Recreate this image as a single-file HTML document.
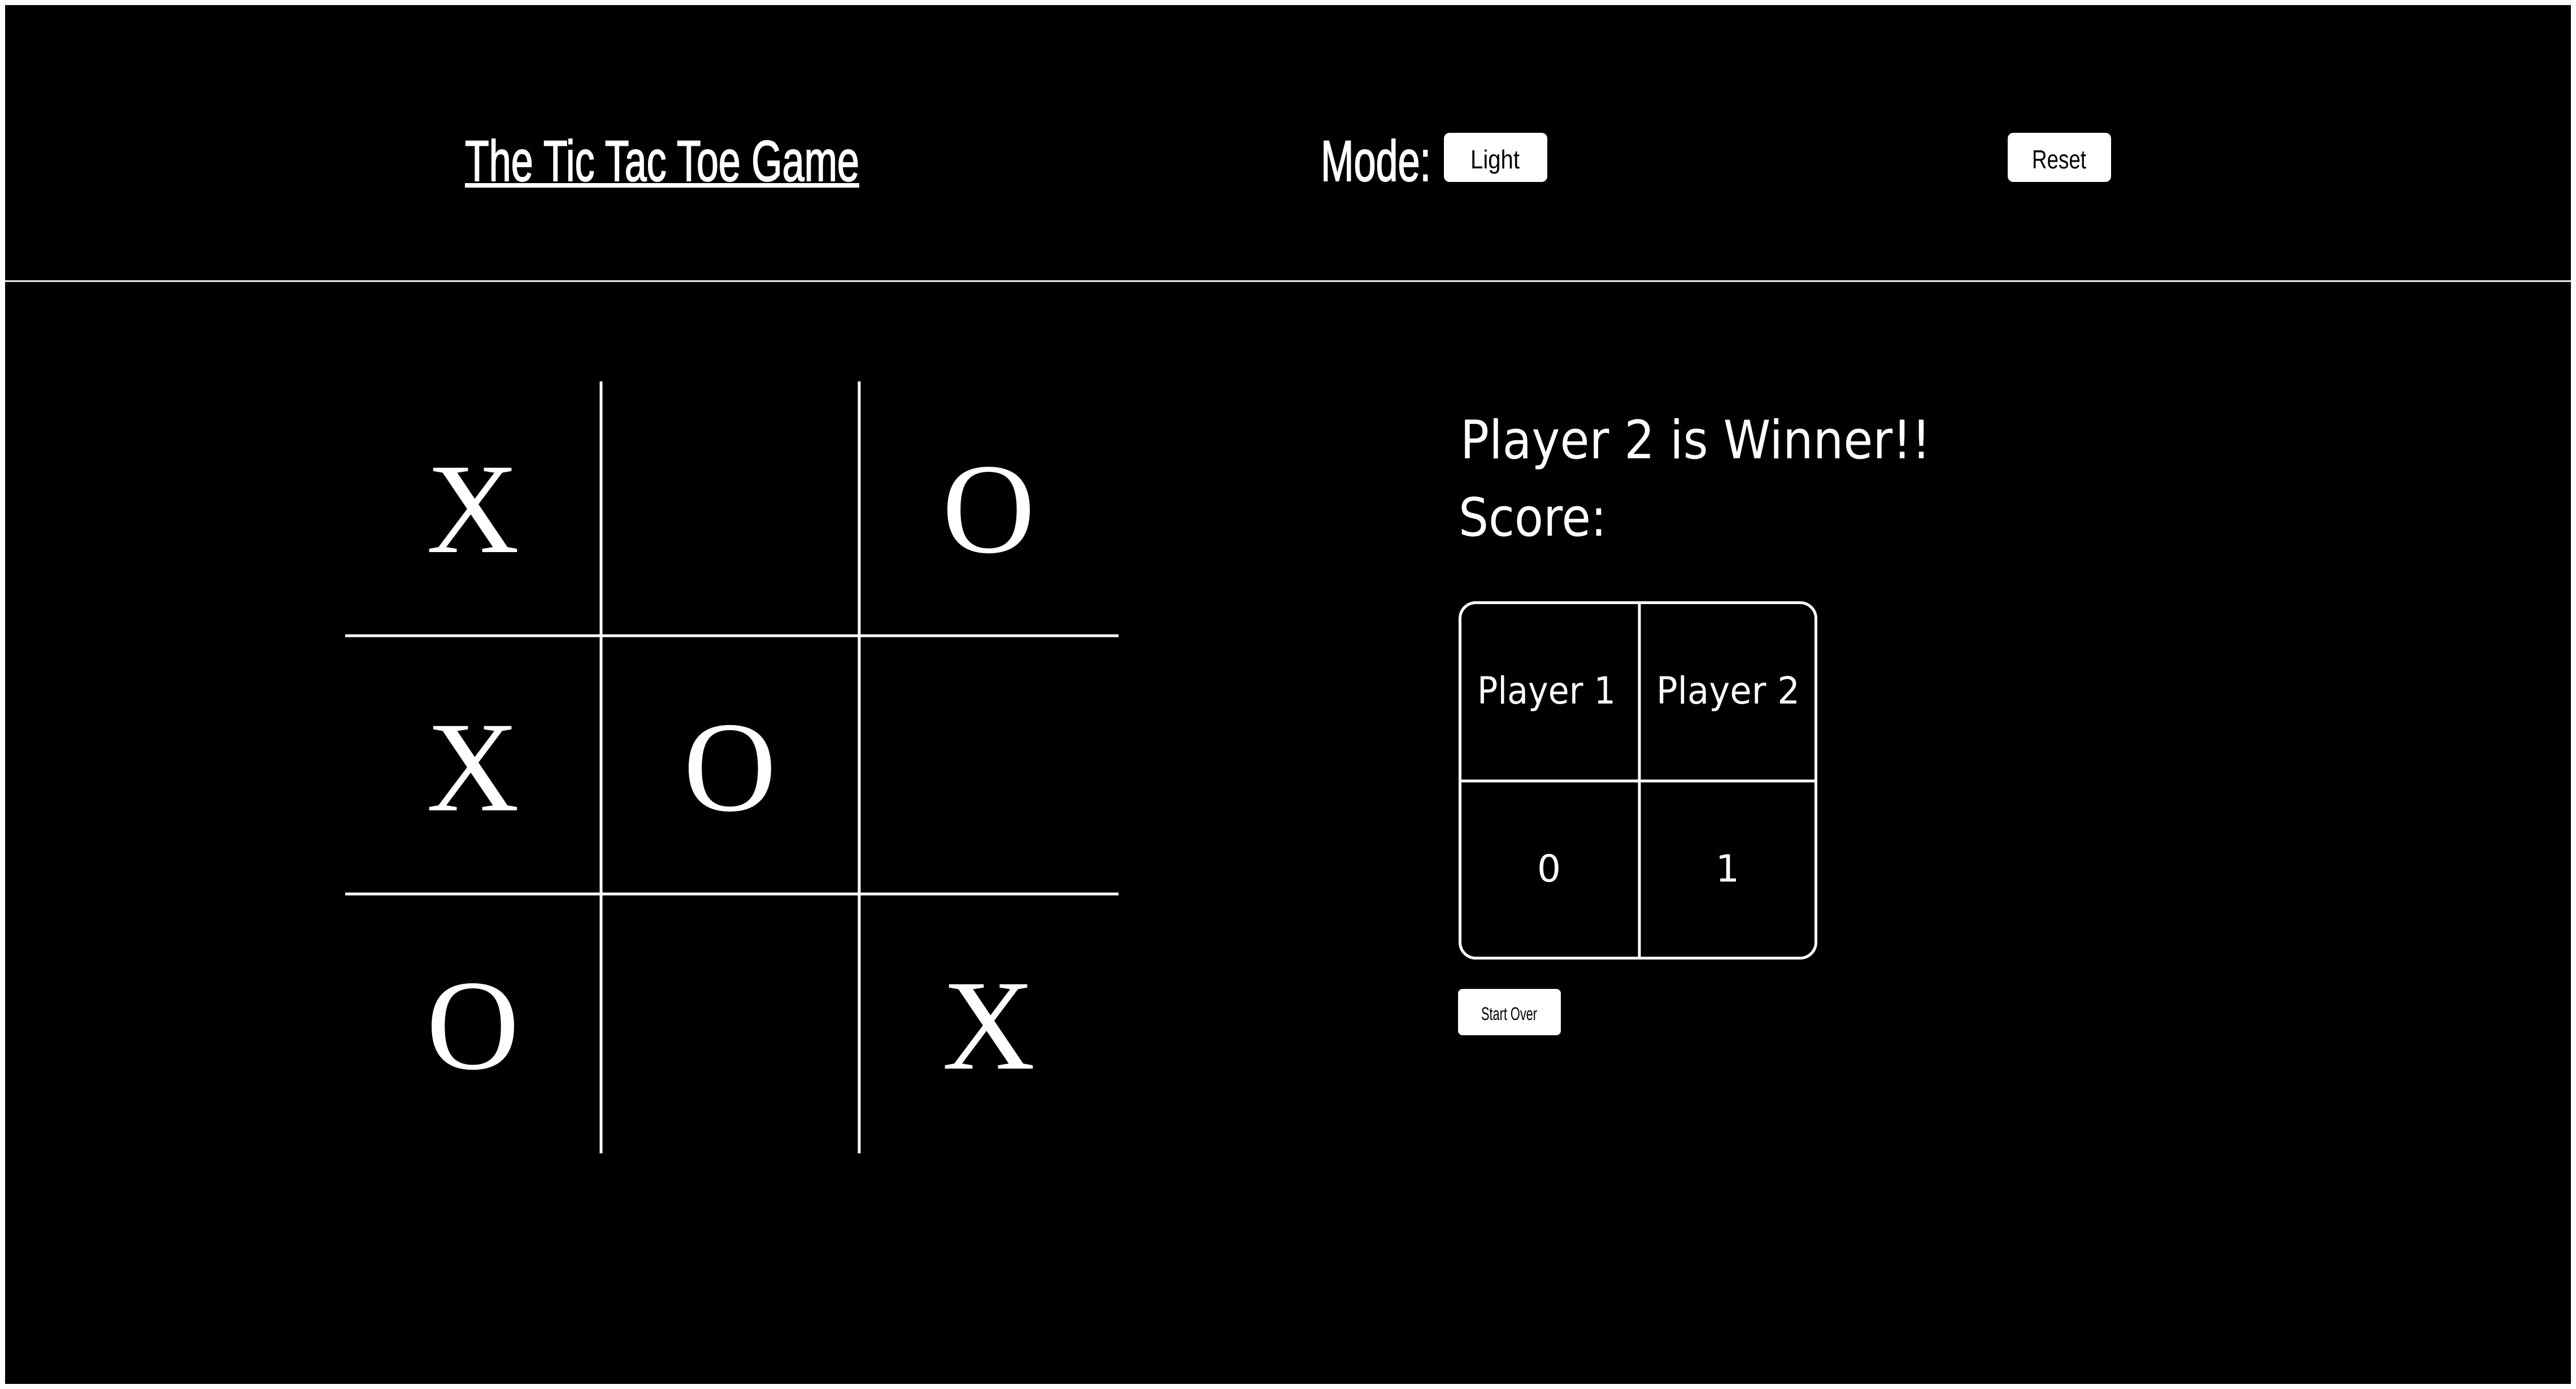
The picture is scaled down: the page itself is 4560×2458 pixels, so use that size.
<!DOCTYPE html>
<html><head><meta charset="utf-8"><style>
html,body{margin:0;padding:0;background:#fff;width:4560px;height:2458px;overflow:hidden}
svg{display:block}
</style></head><body>
<svg width="4560" height="2458" viewBox="0 0 4560 2458" xmlns="http://www.w3.org/2000/svg">
<rect x="9" y="9" width="4542" height="2440" fill="#000"/>
<rect x="9" y="496" width="4542" height="3" fill="#eee"/>
<g fill="#fff" font-family="Liberation Sans Narrow, Liberation Sans, sans-serif">
<text x="823" y="320" font-size="102" textLength="698" lengthAdjust="spacingAndGlyphs" stroke="#fff" stroke-width="2">The Tic Tac Toe Game</text>
<rect x="823" y="324" width="698" height="8"/>
<text x="2338" y="320" font-size="102" textLength="195" lengthAdjust="spacingAndGlyphs" stroke="#fff" stroke-width="2">Mode:</text>
<rect x="2556" y="235" width="183" height="87" rx="10"/>
<rect x="3554" y="235" width="183" height="87" rx="10"/>
<rect x="2581" y="1750" width="182" height="82" rx="8"/>
</g>
<g fill="#000" font-family="Liberation Sans Narrow, Liberation Sans, sans-serif">
<text x="2603" y="298" font-size="46" textLength="87" lengthAdjust="spacingAndGlyphs">Light</text>
<text x="3597" y="298" font-size="46" textLength="96" lengthAdjust="spacingAndGlyphs">Reset</text>
<text x="2622" y="1805" font-size="32" textLength="99" lengthAdjust="spacingAndGlyphs">Start Over</text>
</g>
<g stroke="#fff" stroke-width="5">
<line x1="1064" y1="675" x2="1064" y2="2041"/>
<line x1="1521" y1="675" x2="1521" y2="2041"/>
<line x1="611" y1="1125" x2="1980" y2="1125"/>
<line x1="611" y1="1582" x2="1980" y2="1582"/>
</g>
<g fill="#fff" font-family="Liberation Serif, serif" font-size="228" text-anchor="middle">
<text x="837" y="977">X</text>
<text x="1750" y="977">O</text>
<text x="837" y="1434">X</text>
<text x="1292" y="1434">O</text>
<text x="837" y="1891">O</text>
<text x="1750" y="1891">X</text>
</g>
<g fill="#fff" font-family="DejaVu Sans, sans-serif">
<text x="2585" y="811" font-size="94" textLength="833" lengthAdjust="spacingAndGlyphs">Player 2 is Winner!!</text>
<text x="2582" y="948" font-size="94" textLength="262" lengthAdjust="spacingAndGlyphs">Score:</text>
<text x="2615" y="1245" font-size="66" textLength="245" lengthAdjust="spacingAndGlyphs">Player 1</text>
<text x="2932" y="1245" font-size="66" textLength="254" lengthAdjust="spacingAndGlyphs">Player 2</text>
<text x="2742" y="1560" font-size="66" text-anchor="middle">0</text>
<text x="3058" y="1560" font-size="66" text-anchor="middle">1</text>
</g>
<rect x="2584.5" y="1066.5" width="630" height="629" rx="28" fill="none" stroke="#fff" stroke-width="5"/>
<line x1="2902" y1="1066" x2="2902" y2="1696" stroke="#fff" stroke-width="5"/>
<line x1="2584" y1="1382" x2="3215" y2="1382" stroke="#fff" stroke-width="5"/>
</svg>
</body></html>
